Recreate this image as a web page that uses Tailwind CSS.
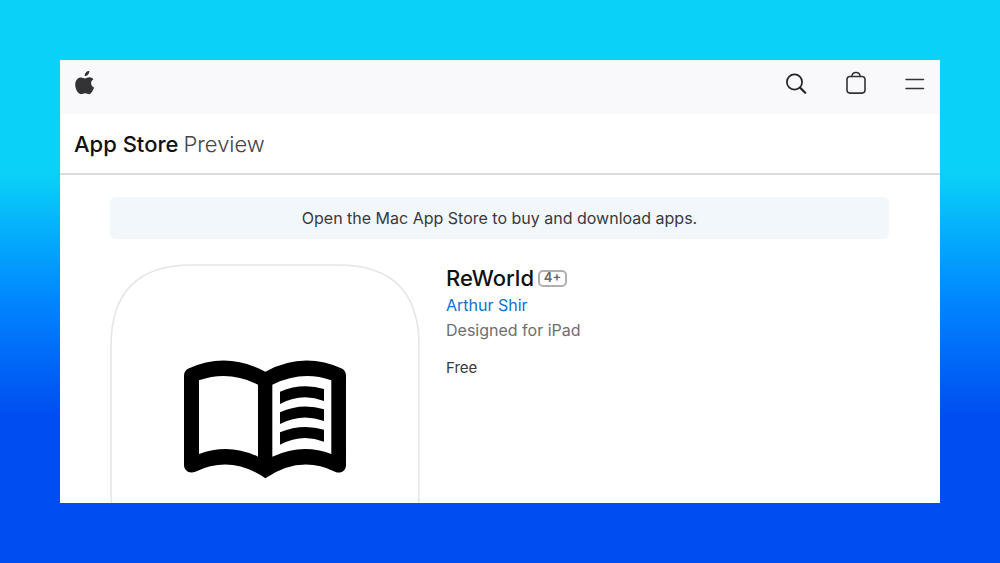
<!DOCTYPE html>
<html lang="en">
<head>
<meta charset="utf-8">
<meta name="viewport" content="width=device-width, initial-scale=1">
<title>ReWorld on the App Store</title>
<script src="https://cdn.jsdelivr.net/npm/@tailwindcss/browser@4"></script>
</head>
<body class="flex h-screen flex-col bg-[linear-gradient(#0ad1f8_31%,#0087ff_53%,#004df0_74%)] p-15 font-['Inter',sans-serif] text-[#3a3a3a]">
<div class="flex min-h-0 flex-1 flex-col overflow-hidden bg-white">
  <header class="flex h-[54px] shrink-0 items-start justify-between bg-[#f9f9fb] pt-2.5 pr-3 pl-3.5">
    <a href="#" aria-label="Apple">
      <svg class="h-[26px] w-[22px]" viewBox="0 0 22 26" fill="#333336"><path d="M15.300.8c.3 2.900-1.900 5.300-4.600 5.300C10.500 3.400 12.700 1 15.300.8zM19.500 9.300c-1.700 1-2.400 2.400-2.400 4 0 1.900 1.200 3.500 2.900 4.200-.8 2.700-2.700 6.700-4.900 6.700-1.500 0-2.200-.9-4-.9s-2.600.9-4 .9C3.900 24.200 1.200 19 1.200 14.600c0-4.500 2.700-7.200 5.700-7.200 1.700 0 3.100 1 4.100 1s2.600-1.100 4.500-1.100c1.600 0 3.100.7 4 2z"/></svg>
    </a>
    <nav class="flex gap-9" aria-label="Site">
      <button type="button" aria-label="Search"><svg class="size-6" viewBox="0 0 24 24" fill="none" stroke="#222" stroke-linecap="round"><circle cx="10.500" cy="12" r="7.600" stroke-width="1.700"/><path d="m16.200 17.800 5 5" stroke-width="2.200"/></svg></button>
      <button type="button" aria-label="Shopping bag"><svg class="size-6" viewBox="0 0 24 24" fill="none" stroke="#333" stroke-width="1.600"><rect x="3" y="6.500" width="18" height="16.600" rx="3"/><path d="M7.800 6.300C8.200 3.700 9.700 2.500 12 2.500s3.800 1.200 4.200 3.800"/></svg></button>
      <button type="button" aria-label="Menu"><svg class="size-6" viewBox="0 0 24 24" stroke="#333" stroke-width="1.500" stroke-linecap="round"><path d="M2 9.600h17.500M2 18.400h17.500"/></svg></button>
    </nav>
  </header>
  <div class="flex h-[61px] shrink-0 items-center border-b-2 border-[#dcdcdc] px-3.5">
    <h2 class="flex gap-[5px] text-[22px] leading-7 text-[#444]"><a href="#" class="font-medium text-[#111]">App Store</a> <span class="font-light">Preview</span></h2>
  </div>
  <main class="flex min-h-0 flex-1 flex-col overflow-hidden pt-[22px] pr-[51px] pl-[50px]">
    <p class="flex h-[42px] shrink-0 items-center justify-center rounded-md bg-[#f2f7fc] text-base">Open the Mac App Store to buy and download apps.</p>
    <section class="mt-[25px] flex items-start gap-[26px]">
      <svg class="size-[310px] shrink-0" viewBox="0 0 310 310" role="img" aria-label="ReWorld app icon">
        <path d="M1 82C1 28 28 1 82 1h146c54 0 81 27 81 81v146c0 54-27 81-81 81H82c-54 0-81-27-81-81z" fill="#fff" stroke="#e5e5e5" stroke-width="1.500"/>
        <g transform="translate(60 81) scale(.3333)">
          <path fill-rule="evenodd" d="M42 92q0-14 12-21Q170 18 286 80 400 18 517 71q11 7 11 21v268c0 19-17 27-33 20Q390 329 286 400 184 329 76 380c-18 7-34-3-34-20zM87 106q90-31 177 13v216q-87-42-177-8zM307 119q90-44 177-13v221q-87-34-177 8z"/>
          <path d="M330 140q66-28 132-8v36q-66-26-132 9zM330 202q66-30 132-9v35q-66-25-132 9zM330 262q66-28 132-8v36q-66-26-132 9z"/>
        </g>
      </svg>
      <div>
        <div class="flex items-center gap-1">
          <h1 class="text-[22px] leading-7 font-medium text-[#111]">ReWorld</h1>
          <span class="flex h-[17px] w-[29px] items-center justify-center rounded-[5px] border-2 border-[#b0b0b0] text-[13px] font-semibold text-[#666]">4+</span>
        </div>
        <a href="#" class="block text-base leading-[26px] text-[#0b72d3]">Arthur Shir</a>
        <p class="text-base leading-6 text-[#6e6e6e]">Designed for iPad</p>
        <p class="mt-4 text-[15px] leading-5">Free</p>
      </div>
    </section>
  </main>
</div>
</body>
</html>
